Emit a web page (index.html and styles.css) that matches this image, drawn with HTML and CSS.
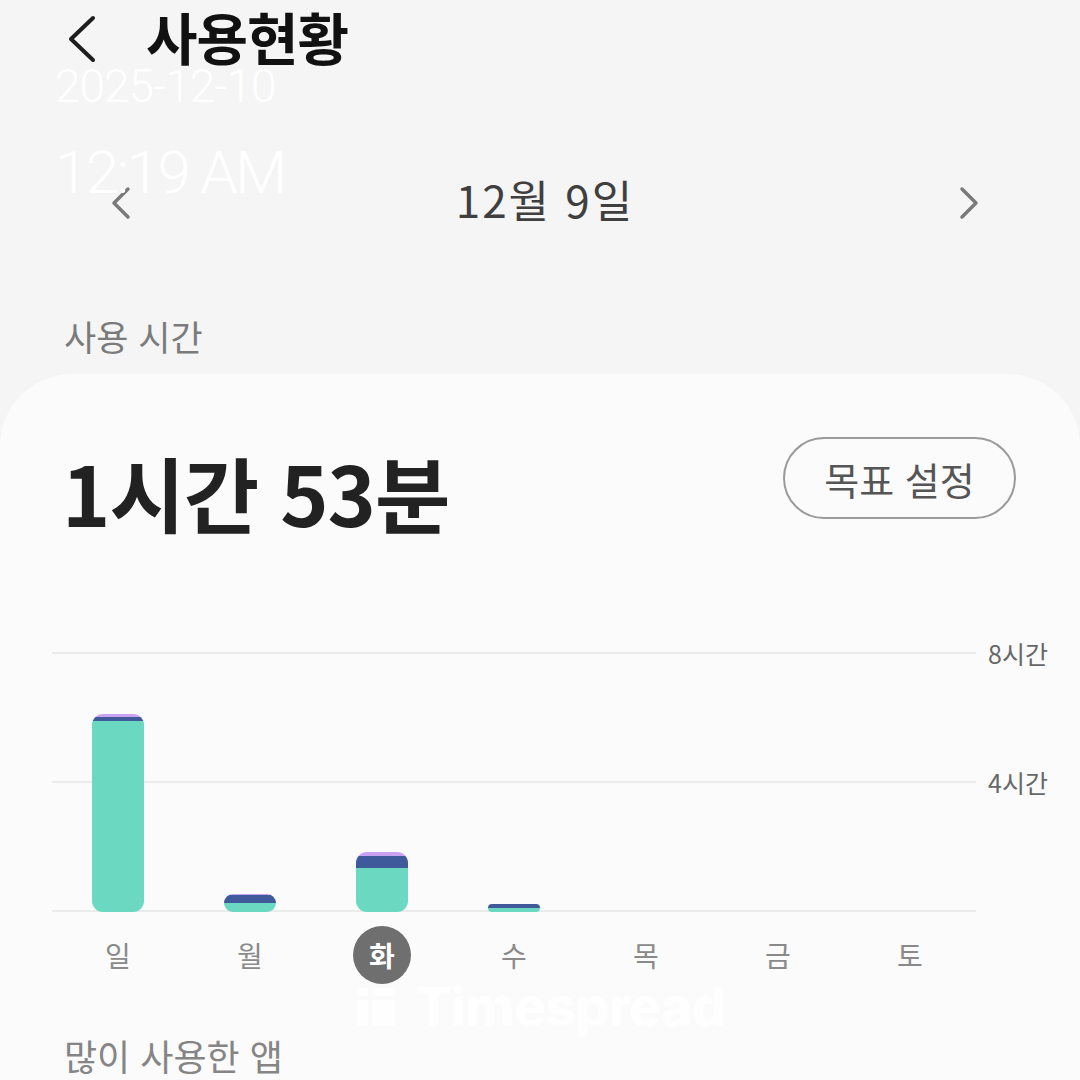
FILE: index.html
```html
<!DOCTYPE html>
<html lang="ko">
<head>
<meta charset="utf-8">
<title>사용현황</title>
<link rel="stylesheet" href="styles.css">
</head>
<body>
<div class="screen">
  <header class="topbar">
    <svg class="back" width="32" height="48" viewBox="0 0 32 48"><polyline points="27,3 5,24 27,45" fill="none" stroke="#1e1e1e" stroke-width="4" stroke-linecap="round" stroke-linejoin="round"/></svg>
    <h1 class="title">사용현황</h1>
  </header>

  <div class="datebar">
    <svg class="nav" width="22" height="34" viewBox="0 0 22 34"><polyline points="18,3 4,17 18,31" fill="none" stroke="#7a7a7a" stroke-width="3.5" stroke-linecap="round" stroke-linejoin="round"/></svg>
    <div class="date">12월 9일</div>
    <svg class="nav" width="22" height="34" viewBox="0 0 22 34"><polyline points="4,3 18,17 4,31" fill="none" stroke="#7a7a7a" stroke-width="3.5" stroke-linecap="round" stroke-linejoin="round"/></svg>
  </div>

  <div class="section-label">사용 시간</div>

  <main class="card">
    <div class="total-row">
      <div class="total">1시간 53분</div>
      <button class="goal">목표 설정</button>
    </div>

    <div class="chart">
      <div class="grid">
        <div class="gridrow"><div class="gline"></div><span class="glabel">8시간</span></div>
        <div class="gridrow"><div class="gline"></div><span class="glabel">4시간</span></div>
        <div class="gridrow"><div class="gline"></div><span class="glabel"></span></div>
      </div>
      <div class="bars">
        <div class="col"><div class="bar" style="height:198px"><div class="seg purple" style="height:3px"></div><div class="seg navy" style="height:4px"></div><div class="seg teal" style="flex:1"></div></div></div>
        <div class="col"><div class="bar" style="height:18px"><div class="seg purple" style="height:1px"></div><div class="seg navy" style="height:8px"></div><div class="seg teal" style="flex:1"></div></div></div>
        <div class="col"><div class="bar" style="height:60px"><div class="seg purple" style="height:4px"></div><div class="seg navy" style="height:12px"></div><div class="seg teal" style="flex:1"></div></div></div>
        <div class="col"><div class="bar small" style="height:8px"><div class="seg navy" style="height:4px"></div><div class="seg teal" style="flex:1"></div></div></div>
        <div class="col"></div>
        <div class="col"></div>
        <div class="col"></div>
      </div>
    </div>

    <div class="days">
      <div class="day">일</div>
      <div class="day">월</div>
      <div class="day"><span class="sel">화</span></div>
      <div class="day">수</div>
      <div class="day">목</div>
      <div class="day">금</div>
      <div class="day">토</div>
    </div>

    <div class="section-label apps">많이 사용한 앱</div>
  </main>

  <div class="stamp stamp-date">2025-12-10</div>
  <div class="stamp stamp-time">12:19 AM</div>
  <div class="brand">
    <svg width="42" height="42" viewBox="0 0 42 42"><rect x="2" y="2" width="11" height="8" fill="#fff"/><rect x="2" y="14" width="11" height="26" fill="#fff"/><rect x="17" y="14" width="23" height="26" fill="#fff"/><rect x="17" y="2" width="23" height="8" fill="#fff"/></svg>
    <span>Timespread</span>
  </div>
</div>
</body>
</html>
```

FILE: styles.css
```css
* { box-sizing: border-box; }
html, body { margin: 0; padding: 0; }
body {
  width: 1080px;
  height: 1080px;
  overflow: hidden;
  background: #f5f5f5;
  font-family: "Noto Sans CJK KR", "Noto Sans", sans-serif;
}
.screen {
  position: relative;
  width: 1080px;
  height: 1080px;
  overflow: hidden;
}
.topbar {
  height: 78px;
  display: flex;
  align-items: center;
  padding-left: 66px;
}
.back { display: block; margin-right: 48px; }
.title {
  margin: -6px 0 0 0;
  font-size: 56px;
  font-weight: 700;
  color: #111;
  line-height: 1.2;
  letter-spacing: -1px;
}
.datebar {
  margin-top: 90px;
  height: 70px;
  display: flex;
  align-items: center;
  justify-content: space-between;
  padding: 0 100px 0 110px;
}
.date {
  font-size: 44px;
  color: #3f3f3f;
  line-height: 1.2;
  letter-spacing: 2px;
  margin-top: -8px;
}
.section-label {
  margin-top: 72px;
  height: 50px;
  display: flex;
  align-items: center;
  padding-left: 64px;
  font-size: 35px;
  color: #7b7b7b;
}
.card {
  margin-top: 14px;
  background: #fbfbfb;
  border-radius: 72px 72px 0 0;
  padding-top: 63px;
  height: 720px;
}
.total-row {
  height: 82px;
  display: flex;
  align-items: center;
  justify-content: space-between;
  padding: 0 64px 0 62px;
}
.total {
  font-size: 82px;
  font-weight: 700;
  color: #222;
  letter-spacing: -1px;
  line-height: 1.2;
  margin-top: 28px;
}
.goal {
  height: 82px;
  width: 233px;
  border: 2px solid #9a9a9a;
  border-radius: 41px;
  background: transparent;
  font-family: inherit;
  font-size: 38px;
  color: #555;
  padding: 0;
}
.chart {
  position: relative;
  margin-top: 121px;
  margin-left: 52px;
}
.grid {
  display: flex;
  flex-direction: column;
  gap: 103px;
}
.gridrow {
  height: 26px;
  display: flex;
  align-items: center;
}
.gline {
  width: 924px;
  height: 2px;
  background: #ebebeb;
}
.glabel {
  margin-left: 12px;
  font-size: 25px;
  color: #676767;
}
.bars {
  position: absolute;
  left: 0;
  top: 0;
  bottom: 12px;
  width: 924px;
  display: flex;
  align-items: flex-end;
}
.col {
  width: 132px;
  display: flex;
  justify-content: center;
}
.bar {
  width: 52px;
  border-radius: 11px;
  overflow: hidden;
  display: flex;
  flex-direction: column;
}
.bar.small { border-radius: 4px; }
.seg { width: 100%; }
.purple { background: #c9a2f2; }
.navy { background: #3f5a9b; }
.teal { background: #6bd9c2; }
.days {
  margin-top: 2px;
  margin-left: 52px;
  display: flex;
  height: 58px;
}
.day {
  width: 132px;
  display: flex;
  align-items: center;
  justify-content: center;
  font-size: 28px;
  color: #8a8a8a;
}
.sel {
  width: 58px;
  height: 58px;
  border-radius: 50%;
  background: #6f6f6f;
  color: #fff;
  font-weight: 700;
  display: flex;
  align-items: center;
  justify-content: center;
}
.section-label.apps {
  margin-top: 46px;
  font-size: 36px;
  color: #858585;
}
.stamp {
  position: absolute;
  left: 55px;
  color: #ffffff;
  font-family: "Roboto", "Noto Sans", sans-serif;
  font-weight: 300;
  line-height: 1;
}
.stamp-date { top: 63px; font-size: 46px; letter-spacing: -1px; }
.stamp-time { top: 143px; font-size: 60px; letter-spacing: -2.5px; }
.brand {
  position: absolute;
  left: 355px;
  top: 980px;
  display: flex;
  align-items: center;
  gap: 18px;
  opacity: 0.9;
}
.brand span {
  font-family: "Inter", "Roboto", sans-serif;
  font-weight: 800;
  font-size: 54px;
  color: #fff;
  letter-spacing: -1px;
  line-height: 1;
}
```
